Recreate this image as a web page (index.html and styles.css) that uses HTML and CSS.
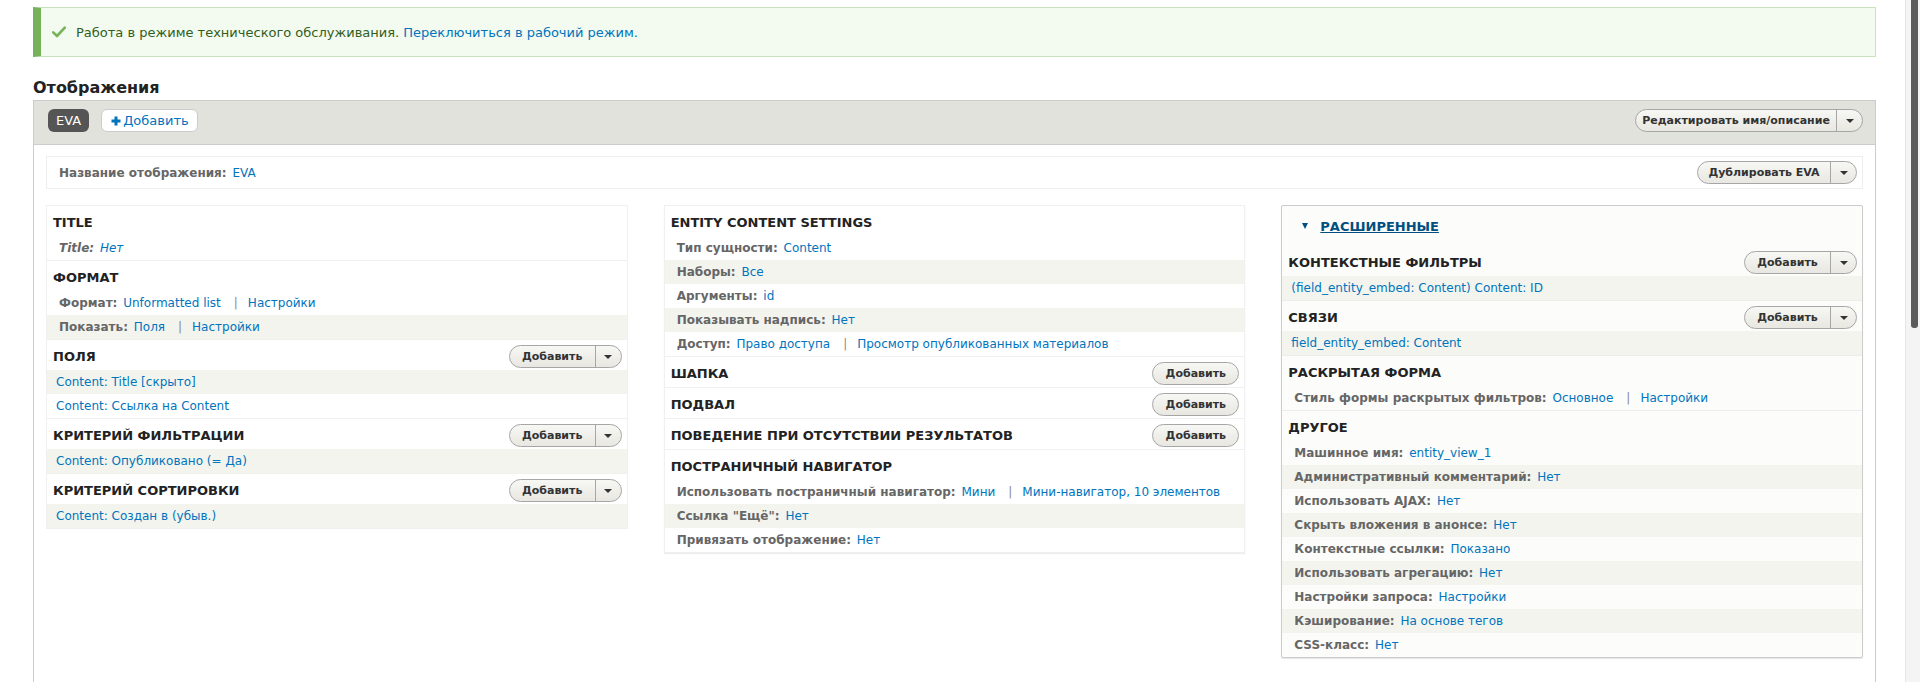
FILE: index.html
```html
<!DOCTYPE html>
<html lang="ru">
<head>
<meta charset="utf-8">
<title>Отображения</title>
<link rel="stylesheet" href="styles.css">
</head>
<body>
<div class="page">
  <div class="messages">
    <svg class="msg-icon" width="14" height="12" viewBox="0 0 14 12"><path d="M1.2 6.4 L5 10 L12.8 1.6" fill="none" stroke="#77b259" stroke-width="2.6" stroke-linecap="round" stroke-linejoin="round"/></svg>
    <span>Работа в режиме технического обслуживания. <a href="#">Переключиться в рабочий режим.</a></span>
  </div>

  <h2 class="section-title">Отображения</h2>

  <div class="display-wrapper">
    <div class="display-top">
      <div class="tabs">
        <span class="tab tab-active">EVA</span>
        <a class="tab tab-add" href="#"><svg class="plus" width="10" height="10" viewBox="0 0 10 10"><path d="M5 0.5 V9.5 M0.5 5 H9.5" stroke="#0074bd" stroke-width="3"/></svg>Добавить</a>
      </div>
      <div class="dropbutton dropbutton-wide">
        <span class="db-main">Редактировать имя/описание</span><span class="db-toggle"><i class="caret"></i></span>
      </div>
    </div>

    <div class="display-content">
      <div class="display-name">
        <div><span class="label">Название отображения:</span> <a href="#">EVA</a></div>
        <div class="dropbutton">
          <span class="db-main db-dup">Дублировать EVA</span><span class="db-toggle"><i class="caret"></i></span>
        </div>
      </div>

      <div class="columns">
        <!-- Left column -->
        <div class="column">
          <div class="bucket">
            <div class="head"><span>Title</span></div>
            <div class="row"><span class="label italic">Title:</span> <a class="italic" href="#">Нет</a></div>
          </div>
          <div class="bucket">
            <div class="head"><span>Формат</span></div>
            <div class="row"><span class="label">Формат:</span> <a href="#">Unformatted list</a><span class="sep">|</span><a href="#">Настройки</a></div>
            <div class="row alt"><span class="label">Показать:</span> <a href="#">Поля</a><span class="sep">|</span><a href="#">Настройки</a></div>
          </div>
          <div class="bucket">
            <div class="head"><span>Поля</span>
              <div class="dropbutton"><span class="db-main">Добавить</span><span class="db-toggle"><i class="caret"></i></span></div>
            </div>
            <div class="row link alt"><a href="#">Content: Title [скрыто]</a></div>
            <div class="row link"><a href="#">Content: Ссылка на Content</a></div>
          </div>
          <div class="bucket">
            <div class="head"><span>Критерий фильтрации</span>
              <div class="dropbutton"><span class="db-main">Добавить</span><span class="db-toggle"><i class="caret"></i></span></div>
            </div>
            <div class="row link alt"><a href="#">Content: Опубликовано (= Да)</a></div>
          </div>
          <div class="bucket">
            <div class="head"><span>Критерий сортировки</span>
              <div class="dropbutton"><span class="db-main">Добавить</span><span class="db-toggle"><i class="caret"></i></span></div>
            </div>
            <div class="row link alt"><a href="#">Content: Создан в (убыв.)</a></div>
          </div>
        </div>

        <!-- Middle column -->
        <div class="column column-shadow">
          <div class="bucket">
            <div class="head"><span>Entity content settings</span></div>
            <div class="row"><span class="label">Тип сущности:</span> <a href="#">Content</a></div>
            <div class="row alt"><span class="label">Наборы:</span> <a href="#">Все</a></div>
            <div class="row"><span class="label">Аргументы:</span> <a href="#">id</a></div>
            <div class="row alt"><span class="label">Показывать надпись:</span> <a href="#">Нет</a></div>
            <div class="row"><span class="label">Доступ:</span> <a href="#">Право доступа</a><span class="sep">|</span><a href="#">Просмотр опубликованных материалов</a></div>
          </div>
          <div class="bucket">
            <div class="head"><span>Шапка</span>
              <div class="button-small">Добавить</div>
            </div>
          </div>
          <div class="bucket">
            <div class="head"><span>Подвал</span>
              <div class="button-small">Добавить</div>
            </div>
          </div>
          <div class="bucket">
            <div class="head"><span>Поведение при отсутствии результатов</span>
              <div class="button-small">Добавить</div>
            </div>
          </div>
          <div class="bucket bucket-last">
            <div class="head"><span>Постраничный навигатор</span></div>
            <div class="row"><span class="label">Использовать постраничный навигатор:</span> <a href="#">Мини</a><span class="sep">|</span><a href="#">Мини-навигатор, 10 элементов</a></div>
            <div class="row alt"><span class="label">Ссылка "Ещё":</span> <a href="#">Нет</a></div>
            <div class="row"><span class="label">Привязать отображение:</span> <a href="#">Нет</a></div>
          </div>
        </div>

        <!-- Right column -->
        <div class="details">
          <div class="summary"><i class="summary-caret"></i><a href="#">Расширенные</a></div>
          <div class="bucket">
            <div class="head"><span>Контекстные фильтры</span>
              <div class="dropbutton"><span class="db-main">Добавить</span><span class="db-toggle"><i class="caret"></i></span></div>
            </div>
            <div class="row link alt"><a href="#">(field_entity_embed: Content) Content: ID</a></div>
          </div>
          <div class="bucket">
            <div class="head"><span>Связи</span>
              <div class="dropbutton"><span class="db-main">Добавить</span><span class="db-toggle"><i class="caret"></i></span></div>
            </div>
            <div class="row link alt"><a href="#">field_entity_embed: Content</a></div>
          </div>
          <div class="bucket">
            <div class="head"><span>Раскрытая форма</span></div>
            <div class="row"><span class="label">Стиль формы раскрытых фильтров:</span> <a href="#">Основное</a><span class="sep">|</span><a href="#">Настройки</a></div>
          </div>
          <div class="bucket bucket-last">
            <div class="head"><span>Другое</span></div>
            <div class="row"><span class="label">Машинное имя:</span> <a href="#">entity_view_1</a></div>
            <div class="row alt"><span class="label">Административный комментарий:</span> <a href="#">Нет</a></div>
            <div class="row"><span class="label">Использовать AJAX:</span> <a href="#">Нет</a></div>
            <div class="row alt"><span class="label">Скрыть вложения в анонсе:</span> <a href="#">Нет</a></div>
            <div class="row"><span class="label">Контекстные ссылки:</span> <a href="#">Показано</a></div>
            <div class="row alt"><span class="label">Использовать агрегацию:</span> <a href="#">Нет</a></div>
            <div class="row"><span class="label">Настройки запроса:</span> <a href="#">Настройки</a></div>
            <div class="row alt"><span class="label">Кэширование:</span> <a href="#">На основе тегов</a></div>
            <div class="row"><span class="label">CSS-класс:</span> <a href="#">Нет</a></div>
          </div>
        </div>
      </div>
    </div>
  </div>
</div>
<div class="scrollbar"><div class="scrollbar-thumb"></div></div>
</body>
</html>
```

FILE: styles.css
```css
* { box-sizing: border-box; }

html { background: #fff; }

body {
  margin: 0;
  font-family: "DejaVu Sans", "Noto Sans", sans-serif;
  font-size: 12px;
  color: #222;
}

a { color: #0074bd; text-decoration: none; }

/* imitation of the window's vertical scrollbar */
.scrollbar {
  position: fixed;
  top: 0;
  right: 0;
  width: 15px;
  height: 100%;
  background: #f4f4f4;
  border-left: 1px solid #e6e6e6;
}

.scrollbar-thumb {
  margin: 0 0 0 5px;
  width: 7px;
  height: 328px;
  border-radius: 0 0 3px 3px;
  background: #5c5c5c;
}

.page {
  padding: 7px 44px 0 33px;
}

/* status message */
.messages {
  display: flex;
  align-items: center;
  gap: 10px;
  height: 50px;
  padding-left: 11px;
  background: #f3faef;
  border: 1px solid #c9e1bd;
  border-left: 8px solid #77b259;
  color: #325e1c;
  font-size: 13px;
}

.msg-icon { flex: none; }

.section-title {
  margin: 21px 0 2px;
  font-size: 16px;
  line-height: 20px;
  font-weight: bold;
  color: #222;
}

/* display wrapper */
.display-wrapper {
  border: 1px solid #ccc;
  border-bottom: none;
  min-height: 1330px;
}

.display-top {
  display: flex;
  justify-content: space-between;
  align-items: flex-start;
  height: 44px;
  padding: 8px 12px 0 14px;
  background: #e1e2dc;
  border-bottom: 1px solid #ccc;
}

.tabs { display: flex; gap: 12px; }

.tab {
  display: flex;
  align-items: center;
  height: 23px;
  border-radius: 6px;
  font-size: 13px;
}

.tab-active {
  padding: 0 8px;
  background: #555;
  color: #fff;
}

.tab-add {
  padding: 0 8px 0 9px;
  background: #fff;
  border: 1px solid #ccc;
  gap: 2px;
}

.plus { flex: none; }

/* dropbuttons */
.dropbutton {
  display: flex;
  height: 23px;
  border: 1px solid #a6a6a6;
  border-radius: 12px;
  background: linear-gradient(to bottom, #f7f7f4, #e8e7e1);
  font-size: 11px;
  font-weight: bold;
  color: #333;
  text-transform: none;
  flex: none;
}

.db-main {
  display: flex;
  align-items: center;
  justify-content: center;
  width: 85px;
}

.dropbutton-wide .db-main { width: 200px; }
.db-dup { width: 132px; }

.db-toggle {
  display: flex;
  align-items: center;
  justify-content: center;
  width: 26px;
  border-left: 1px solid #a6a6a6;
}

.caret {
  width: 0;
  height: 0;
  border-left: 4px solid transparent;
  border-right: 4px solid transparent;
  border-top: 4px solid #333;
}

.button-small {
  display: flex;
  align-items: center;
  justify-content: center;
  width: 87px;
  height: 23px;
  border: 1px solid #a6a6a6;
  border-radius: 12px;
  background: linear-gradient(to bottom, #f7f7f4, #e8e7e1);
  font-size: 11px;
  font-weight: bold;
  color: #333;
  text-transform: none;
}

/* content */
.display-content {
  padding: 11px 12px;
}

.display-name {
  display: flex;
  justify-content: space-between;
  align-items: center;
  height: 33px;
  padding: 0 5px 0 12px;
  border: 1px solid #eee;
}

.label {
  font-weight: bold;
  color: #666;
  margin-right: 2px;
}

.italic { font-style: italic; }

.columns {
  display: grid;
  grid-template-columns: repeat(3, 1fr);
  column-gap: 36px;
  align-items: start;
  margin-top: 16px;
}

.column {
  border: 1px solid #f0f0f0;
  background: #fff;
}

.column-shadow {
  box-shadow: 0 1px 1px rgba(0, 0, 0, 0.07);
}

.bucket {
  padding-top: 4px;
  border-bottom: 1px solid #f0f0f0;
}

.bucket-last { border-bottom: none; }
.column .bucket:last-child { border-bottom: none; }

.head {
  display: flex;
  justify-content: space-between;
  align-items: center;
  height: 26px;
  padding: 0 5px 1px 6px;
  font-size: 13px;
  font-weight: bold;
  text-transform: uppercase;
  color: #222;
}

.row {
  line-height: 20px;
  padding: 2px 6px 2px 12px;
  white-space: nowrap;
}

.row.link { padding-left: 9px; }

.alt { background: #f3f4ee; }

.sep {
  margin: 0 10px 0 13px;
  color: #8a8a8a;
}

/* advanced details */
.details {
  border: 1px solid #ccc;
  border-radius: 2px;
  background: #fcfcfa;
  box-shadow: 0 1px 1px rgba(0, 0, 0, 0.1);
}

.summary {
  display: flex;
  align-items: center;
  gap: 12px;
  height: 40px;
  padding-left: 20px;
  font-size: 13px;
  font-weight: bold;
  text-transform: uppercase;
}

.summary a {
  color: #004f80;
  text-decoration: underline;
}

.summary-caret {
  width: 0;
  height: 0;
  border-left: 3.5px solid transparent;
  border-right: 3.5px solid transparent;
  border-top: 6px solid #004f80;
}

.details .bucket { border-bottom-color: #ececec; }
```
